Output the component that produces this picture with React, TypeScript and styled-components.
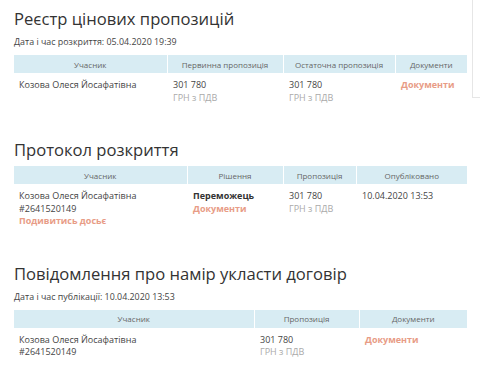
import * as React from 'react'
import styled, { createGlobalStyle } from 'styled-components'

const GlobalStyle = createGlobalStyle`
  html, body {
    margin: 0;
    padding: 0;
    background: #fff;
    overflow: hidden;
  }
  body {
    font-family: 'Open Sans', 'Noto Sans', sans-serif;
    color: #444;
  }
`

const Page = styled.div`
  display: flex;
  align-items: flex-start;
  width: 480px;
  height: 372px;
  overflow: hidden;
`

const Main = styled.main`
  flex: 0 0 auto;
  width: 453px;
  padding: 0 5px 0 14px;
`

const Aside = styled.aside`
  flex: 0 0 auto;
  width: 120px;
  height: 98px;
  border-left: 1px solid #e6e6e6;
  border-bottom: 1px solid #e6e6e6;
  box-sizing: border-box;
`

const Section = styled.section<{ $top: number }>`
  margin-top: ${p => p.$top}px;
`

const Title = styled.h2`
  margin: 0;
  font-size: 16.6px;
  line-height: 24px;
  font-weight: 400;
  color: #333;
`

const Meta = styled.div`
  margin-top: 5px;
  font-size: 8.9px;
  line-height: 12px;
  color: #444;
`

const Table = styled.table<{ $gap: number }>`
  width: 453px;
  margin-top: ${p => p.$gap}px;
  border-collapse: collapse;
  table-layout: fixed;
`

const Th = styled.th`
  height: 18px;
  padding: 0 4px;
  background: #d8ecf3;
  border-left: 1px solid #fff;
  font-size: 8px;
  font-weight: 400;
  color: #666;
  text-align: center;
  &:first-child {
    border-left: none;
  }
`

const Td = styled.td`
  padding: 6px 5px 4px 6px;
  vertical-align: top;
  font-size: 9px;
  line-height: 12.5px;
  color: #444;
  &:first-child {
    padding-left: 5px;
  }
`

const Line = styled.div`
  white-space: nowrap;
`

const Muted = styled(Line)`
  color: #aaa;
`

const Winner = styled(Line)`
  font-weight: 700;
  color: #333;
`

const DocLink = styled.a`
  display: block;
  color: #e89c86;
  font-weight: 700;
  text-decoration: none;
  white-space: nowrap;
`

const Price = () => (
  <>
    <Line>301 780</Line>
    <Muted>ГРН з ПДВ</Muted>
  </>
)

export default function App() {
  return (
    <>
      <GlobalStyle />
      <Page>
        <Main>
          <Section $top={7}>
            <Title>Реєстр цінових пропозицій</Title>
            <Meta>Дата і час розкриття: 05.04.2020 19:39</Meta>
            <Table $gap={7}>
              <colgroup>
                <col style={{ width: 153 }} />
                <col style={{ width: 116 }} />
                <col style={{ width: 112 }} />
                <col style={{ width: 72 }} />
              </colgroup>
              <thead>
                <tr>
                  <Th>Учасник</Th>
                  <Th>Первинна пропозиція</Th>
                  <Th>Остаточна пропозиція</Th>
                  <Th>Документи</Th>
                </tr>
              </thead>
              <tbody>
                <tr>
                  <Td>
                    <Line>Козова Олеся Йосафатівна</Line>
                  </Td>
                  <Td>
                    <Price />
                  </Td>
                  <Td>
                    <Price />
                  </Td>
                  <Td>
                    <DocLink href="#">Документи</DocLink>
                  </Td>
                </tr>
              </tbody>
            </Table>
          </Section>

          <Section $top={30}>
            <Title>Протокол розкриття</Title>
            <Table $gap={4}>
              <colgroup>
                <col style={{ width: 173 }} />
                <col style={{ width: 96 }} />
                <col style={{ width: 73 }} />
                <col style={{ width: 111 }} />
              </colgroup>
              <thead>
                <tr>
                  <Th>Учасник</Th>
                  <Th>Рішення</Th>
                  <Th>Пропозиція</Th>
                  <Th>Опубліковано</Th>
                </tr>
              </thead>
              <tbody>
                <tr>
                  <Td>
                    <Line>Козова Олеся Йосафатівна</Line>
                    <Line>#2641520149</Line>
                    <DocLink href="#">Подивитись досьє</DocLink>
                  </Td>
                  <Td>
                    <Winner>Переможець</Winner>
                    <DocLink href="#">Документи</DocLink>
                  </Td>
                  <Td>
                    <Price />
                  </Td>
                  <Td>
                    <Line>10.04.2020 13:53</Line>
                  </Td>
                </tr>
              </tbody>
            </Table>
          </Section>

          <Section $top={30}>
            <Title>Повідомлення про намір укласти договір</Title>
            <Meta>Дата і час публікації: 10.04.2020 13:53</Meta>
            <Table $gap={7}>
              <colgroup>
                <col style={{ width: 240 }} />
                <col style={{ width: 105 }} />
                <col style={{ width: 108 }} />
              </colgroup>
              <thead>
                <tr>
                  <Th>Учасник</Th>
                  <Th>Пропозиція</Th>
                  <Th>Документи</Th>
                </tr>
              </thead>
              <tbody>
                <tr>
                  <Td>
                    <Line>Козова Олеся Йосафатівна</Line>
                    <Line>#2641520149</Line>
                  </Td>
                  <Td>
                    <Price />
                  </Td>
                  <Td>
                    <DocLink href="#">Документи</DocLink>
                  </Td>
                </tr>
              </tbody>
            </Table>
          </Section>
        </Main>
        <Aside />
      </Page>
    </>
  )
}
